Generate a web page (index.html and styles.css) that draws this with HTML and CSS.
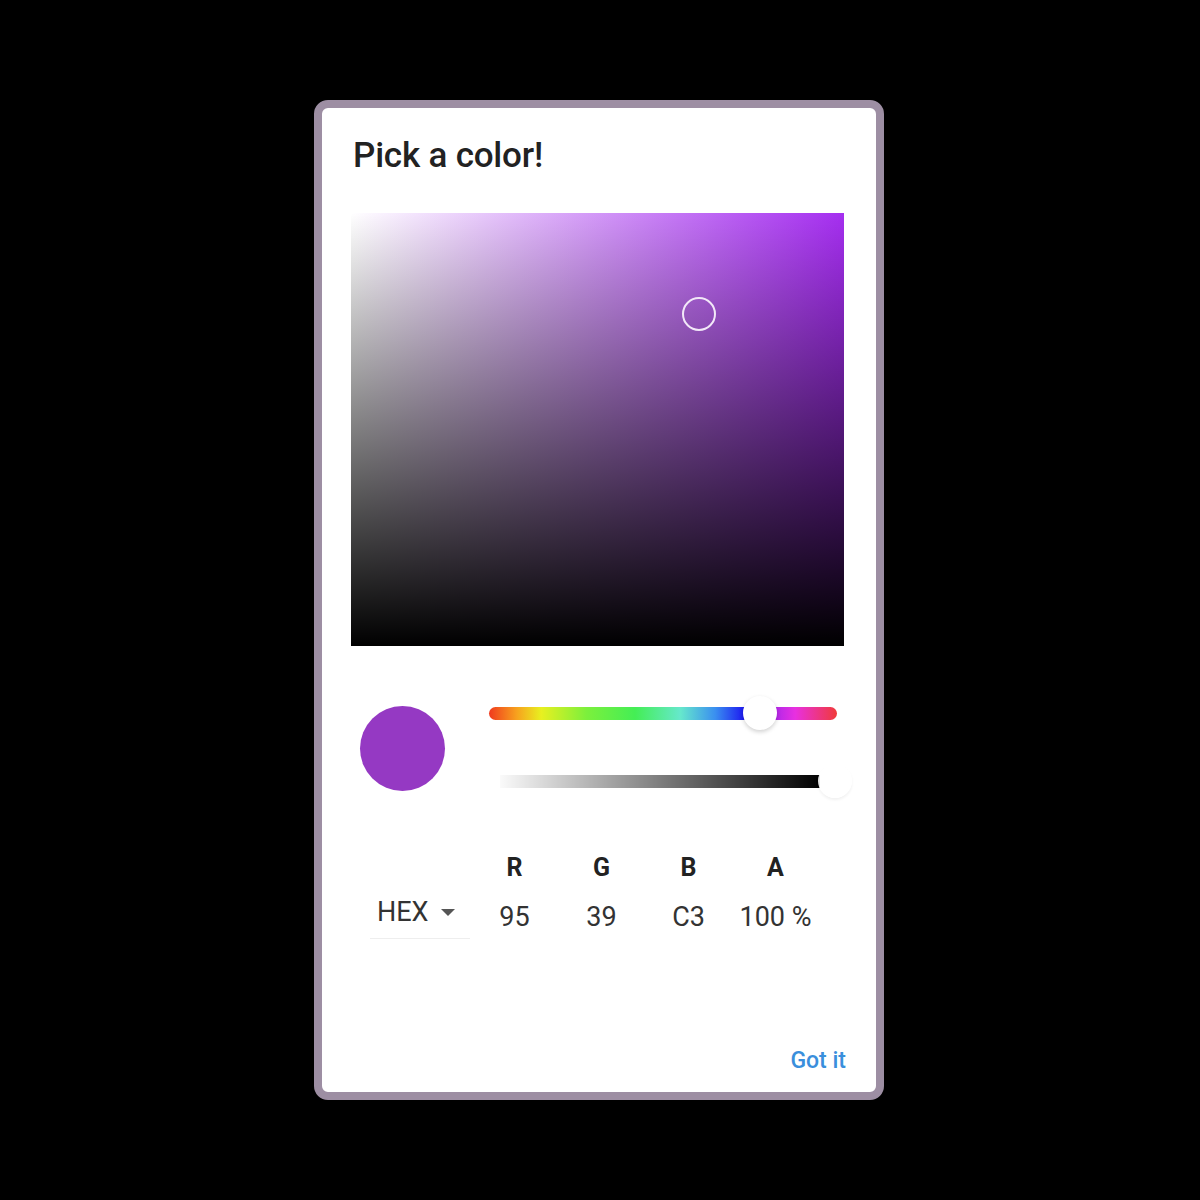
FILE: index.html
```html
<!DOCTYPE html>
<html lang="en">
<head>
<meta charset="UTF-8" />
<title>Pick a color</title>
<link rel="stylesheet" href="styles.css">
</head>
<body>

<div class="dialog">
  <h2 class="title">Pick a color!</h2>

  <div class="sv-area">
    <div class="sv-black"></div>
    <div class="sv-cursor"></div>
  </div>

  <div class="sliders">
    <div class="swatch"></div>
    <div class="bars">
      <div class="bar hue">
        <div class="thumb hue-thumb"></div>
      </div>
      <div class="bar alpha">
        <div class="thumb alpha-thumb"></div>
      </div>
    </div>
  </div>

  <div class="fields">
    <div class="mode">
      <span>HEX</span>
      <span class="caret"></span>
    </div>
    <div class="field"><div class="lbl">R</div><div class="val">95</div></div>
    <div class="field"><div class="lbl">G</div><div class="val">39</div></div>
    <div class="field"><div class="lbl">B</div><div class="val">C3</div></div>
    <div class="field"><div class="lbl">A</div><div class="val">100 %</div></div>
  </div>

  <div class="actions">
    <button class="btn">Got it</button>
  </div>
</div>

</body>
</html>
```

FILE: styles.css
```css
body { margin: 0; background: #000; font-family: Roboto, "Liberation Sans", sans-serif; }
.dialog {
  width: 554px; height: 984px; margin: 100px 0 0 314px;
  background: #fff; border: 8px solid #9d8ea3; border-radius: 14px;
  display: flex; flex-direction: column; box-sizing: content-box;
}
.title { margin: 28px 0 0 31px; font-size: 35px; font-weight: 500; color: #222; line-height: 40px; letter-spacing: -0.2px; }
.sv-area {
  position: relative; margin: 37px 0 0 29px; width: 493px; height: 433px;
  background: linear-gradient(to right, #fff, #a52ef0);
}
.sv-black { position: absolute; inset: 0; background: linear-gradient(to bottom, rgba(0,0,0,0), #000); }
.sv-cursor {
  position: absolute; left: 331px; top: 84px; width: 34px; height: 34px;
  border: 2px solid #f2e8f8; border-radius: 50%; box-sizing: border-box;
}
.sliders { display: flex; align-items: center; margin: 60px 0 0 38px; }
.swatch { width: 85px; height: 85px; border-radius: 50%; background: #9539c3; }
.bars { margin-left: 44px; display: flex; flex-direction: column; gap: 55px; margin-top: -2px; }
.bar { position: relative; height: 13px; border-radius: 7px; }
.hue {
  width: 348px;
  background: linear-gradient(to right, #f03a1e 0%, #f7a21e 8%, #e8f020 15%, #7cf03c 28%, #44ee55 42%, #66e8cc 55%, #3a8ff0 65%, #1e1ef0 73%, #8a22f0 78%, #e830e0 88%, #f03a3a 100%);
}
.alpha { width: 320px; margin-left: 11px; border-radius: 0; background: linear-gradient(to right, rgba(0,0,0,0.02), #000); }
.thumb {
  position: absolute; width: 34px; height: 34px; border-radius: 50%;
  background: #fff; box-shadow: 0 2px 4px rgba(0,0,0,0.18);
}
.hue-thumb { left: 254px; top: -11px; }
.alpha-thumb { left: 318px; top: -11px; background: rgba(255,255,255,0.9); box-shadow: 0 2px 3px rgba(0,0,0,0.06); }
.fields { display: flex; align-items: flex-end; margin: 62px 0 0 48px; color: #333; }
.mode {
  width: 100px; display: flex; align-items: center; gap: 12px; font-size: 27px;
  padding: 0 0 10px 7px; border-bottom: 1px solid #eee; margin-right: 1px; box-sizing: border-box;
}
.caret { width: 0; height: 0; border-left: 7px solid transparent; border-right: 7px solid transparent; border-top: 7px solid #555; }
.field { width: 87px; text-align: center; }
.lbl { font-size: 25px; font-weight: 700; color: #222; margin-bottom: 19px; }
.val { font-size: 27px; margin-bottom: 6px; }
.actions { margin-top: auto; display: flex; justify-content: flex-end; padding: 0 30px 18px 0; }
.btn { border: none; background: none; color: #3a8fdc; font-family: inherit; font-size: 23px; font-weight: 500; padding: 0; }
```
